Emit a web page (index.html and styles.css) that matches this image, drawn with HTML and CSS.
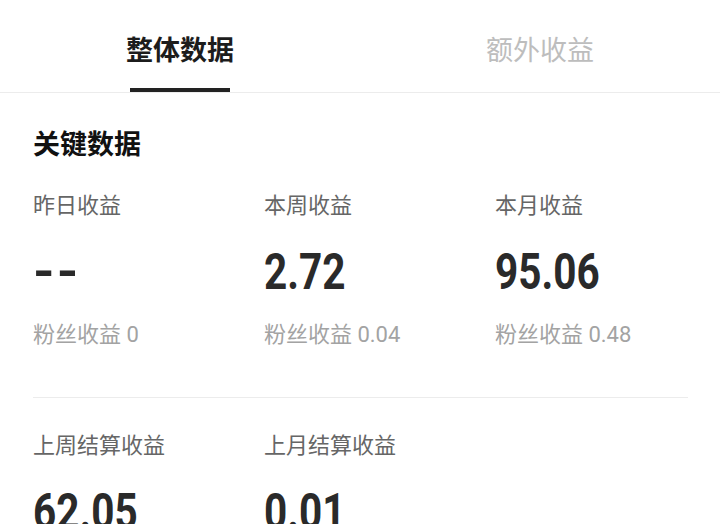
FILE: index.html
```html
<!DOCTYPE html>
<html lang="zh-CN">
<head>
    <meta charset="UTF-8">
    <meta name="viewport" content="width=device-width, initial-scale=1.0">
    <title>收益数据</title>
    <link rel="stylesheet" href="styles.css">
</head>
<body>
    <div class="tabs">
        <div class="tab active">整体数据</div>
        <div class="tab">额外收益</div>
    </div>

    <div class="panel">
        <h2 class="title">关键数据</h2>

        <div class="stats">
            <div class="stat">
                <p class="label">昨日收益</p>
                <p class="value"><span class="empty">--</span></p>
                <p class="sub">粉丝收益 0</p>
            </div>
            <div class="stat">
                <p class="label">本周收益</p>
                <p class="value"><span>2.72</span></p>
                <p class="sub">粉丝收益 0.04</p>
            </div>
            <div class="stat">
                <p class="label">本月收益</p>
                <p class="value"><span>95.06</span></p>
                <p class="sub">粉丝收益 0.48</p>
            </div>
        </div>

        <div class="divider"></div>

        <div class="stats second">
            <div class="stat">
                <p class="label">上周结算收益</p>
                <p class="value"><span>62.05</span></p>
            </div>
            <div class="stat">
                <p class="label">上月结算收益</p>
                <p class="value"><span>0.01</span></p>
            </div>
        </div>
    </div>
</body>
</html>
```

FILE: styles.css
```css
* {
    margin: 0;
    padding: 0;
    box-sizing: border-box;
}

body {
    font-family: Roboto, "Noto Sans CJK SC", sans-serif;
    background-color: #fff;
    color: #222;
    overflow: hidden;
}

.tabs {
    display: flex;
    height: 93px;
    border-bottom: 1px solid #ececec;
}

.tab {
    position: relative;
    flex: 1;
    text-align: center;
    padding-top: 31px;
    font-size: 27px;
    line-height: 40px;
    color: #bdbdbd;
}

.tab.active {
    color: #1c1c1c;
    font-weight: 700;
}

.tab.active::after {
    content: "";
    position: absolute;
    left: 50%;
    bottom: 0;
    width: 100px;
    height: 4px;
    margin-left: -50px;
    background-color: #222;
}

.panel {
    padding: 32px 32px 0 33px;
}

.title {
    font-size: 27px;
    line-height: 40px;
    font-weight: 700;
    color: #111;
}

.stats {
    display: grid;
    grid-template-columns: 231px 231px 1fr;
    margin-top: 26px;
}

.stats.second {
    margin-top: 33px;
}

.label {
    font-size: 22px;
    line-height: 30px;
    color: #666;
}

.value {
    margin-top: 21px;
    font-size: 50px;
    line-height: 60px;
    font-weight: 700;
    color: #2a2a2a;
    white-space: nowrap;
}

.value span {
    display: inline-block;
    transform: scaleX(0.81);
    transform-origin: left center;
}

.value .empty {
    transform: scaleX(1.1);
    letter-spacing: 2px;
}

.sub {
    margin-top: 18px;
    font-size: 22px;
    line-height: 30px;
    color: #a3a3a3;
}

.divider {
    height: 1px;
    margin-top: 47px;
    background-color: #ececec;
}
```
